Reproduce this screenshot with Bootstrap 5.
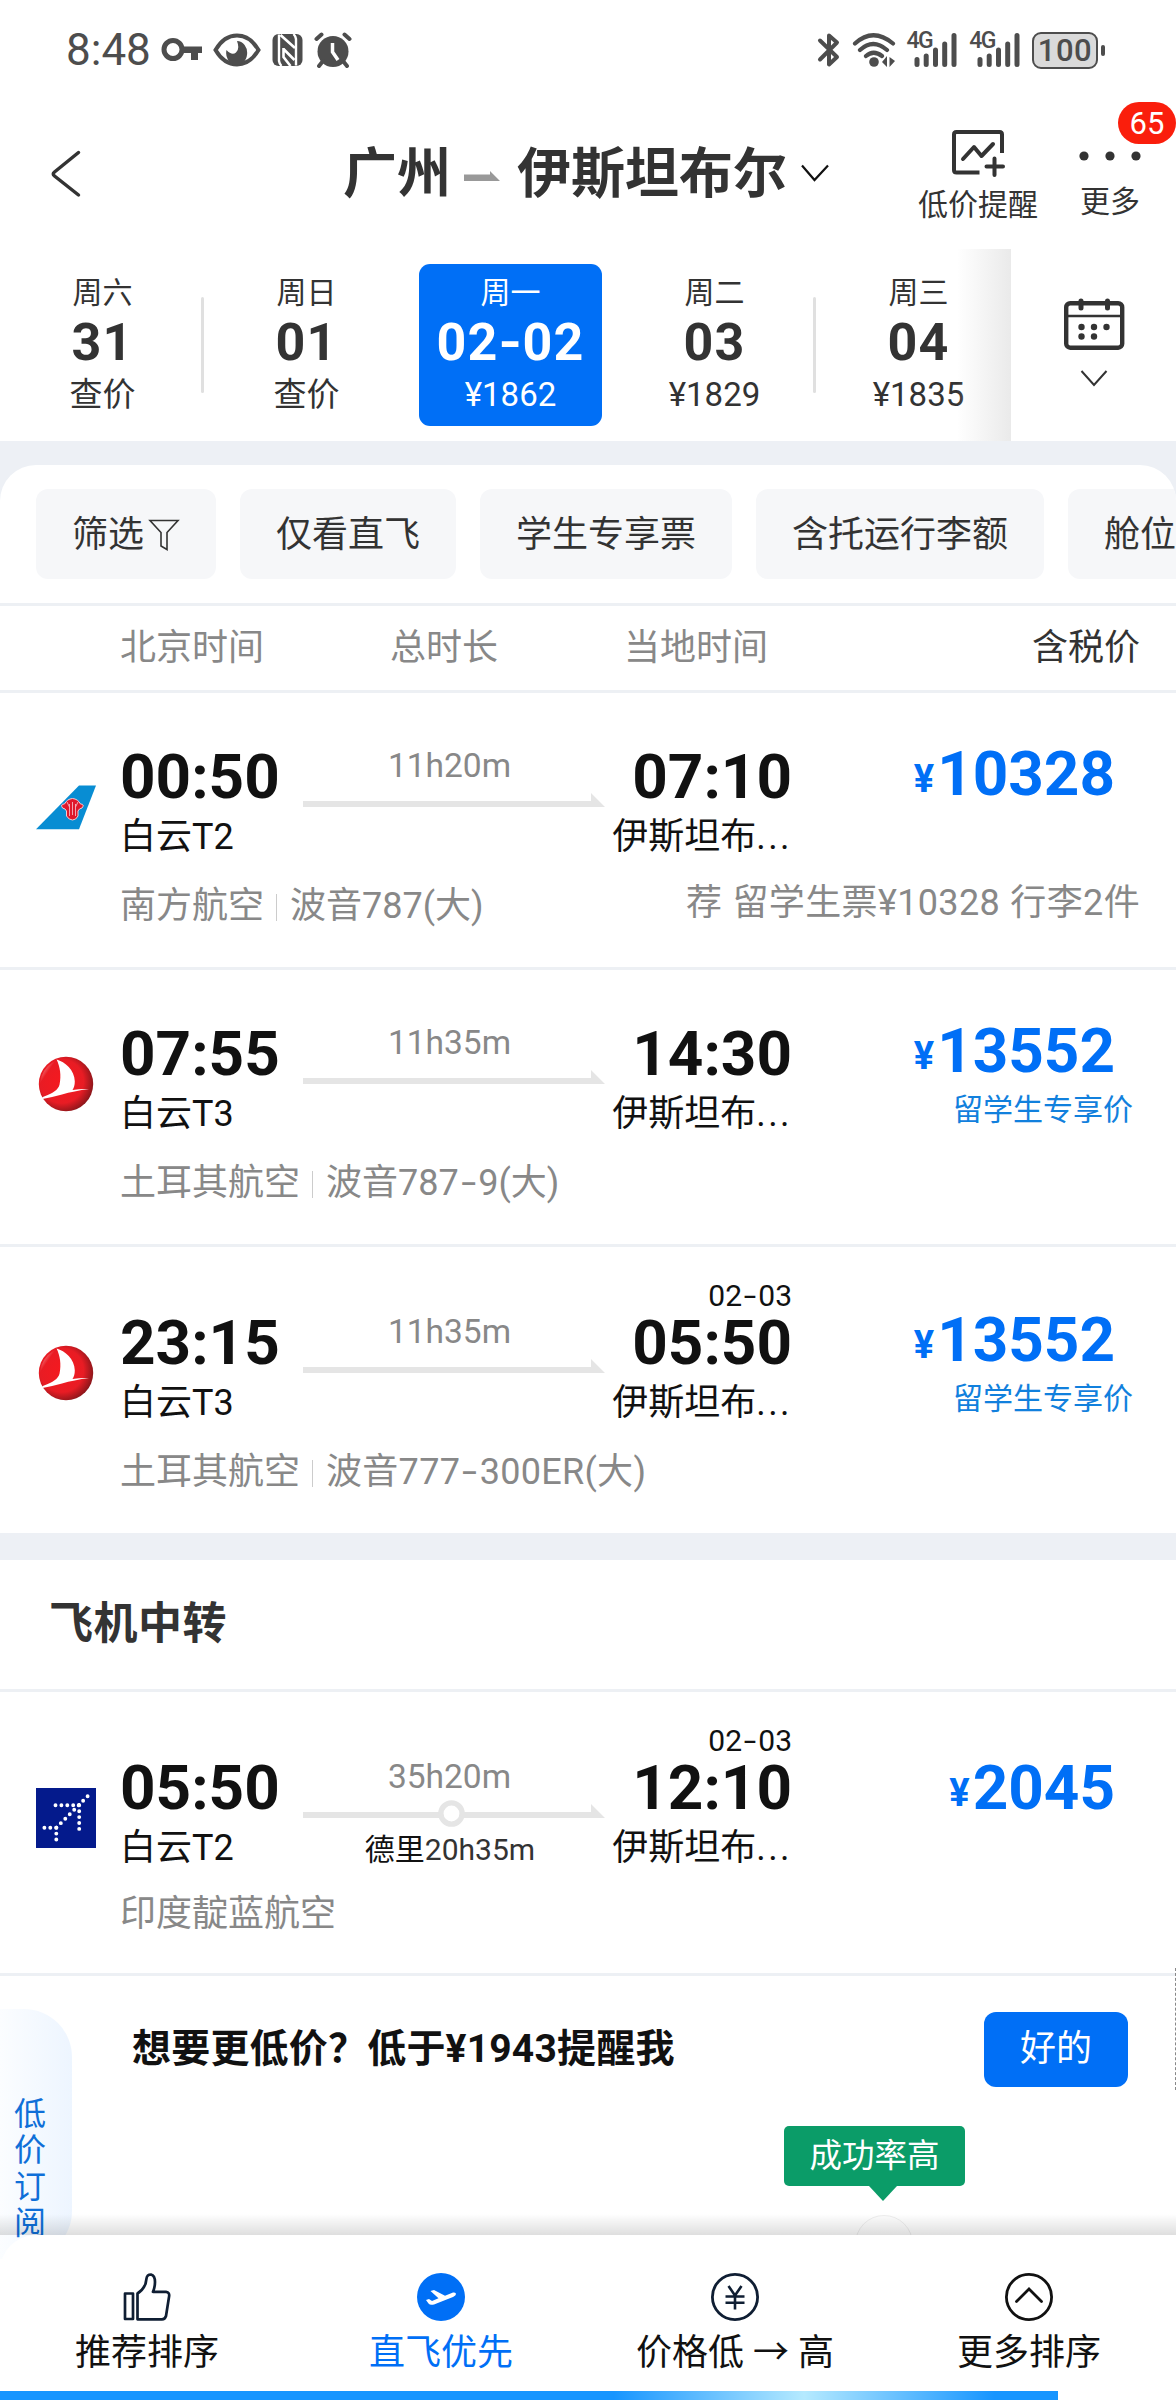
<!DOCTYPE html>
<html lang="zh-CN">
<head>
<meta charset="utf-8">
<meta name="viewport" content="width=device-width, initial-scale=1">
<title>广州 - 伊斯坦布尔</title>
<link href="https://cdn.jsdelivr.net/npm/bootstrap@5.3.0/dist/css/bootstrap.min.css" rel="stylesheet">
<style>
body{font-family:Roboto,"Noto Sans CJK SC",sans-serif;color:#111;background:#fff;font-size:36px;line-height:48px}
svg{display:block;flex:none}
.screen{width:1176px;height:2400px;overflow:hidden}
.ink{color:#333}
.dim{color:#888}
.statusbar{height:100px;padding:0 71px 0 66px;color:#4d4d4d}
.clock{font-size:44px;margin-right:10px}
.net{font-size:23px;line-height:20px;font-weight:500;letter-spacing:-1.500px;margin:-1px -19px 0 0}
.charge{font-size:31px;font-weight:500;line-height:33px;width:66px;height:37px;border:2.400px solid #4d4d4d;border-radius:9px;background:#dadada;letter-spacing:.5px}
.nub{width:4px;height:11px;border-radius:2px;background:#4d4d4d;margin-left:3px}
.titlebar{height:149px;color:#333}
.route{font-size:54px;font-weight:700;line-height:80px;margin-left:261px;padding-top:35px}
.tool-label{font-size:30px;line-height:36px}
.unread{right:0;top:2px;width:58px;height:42px;border-radius:21px;background:#fa1e0c;color:#fff;font-size:31px;line-height:43px}
.dates{height:192px;width:1011px}
.day{width:204px;flex:none;position:relative;padding-top:15px}
.day-box{width:183px;height:162px;border-radius:11px;padding:11px 0 0 1px}
.day-box.on{background:#006ff6;color:#fff}
.d-week{font-size:30px;line-height:36px}
.d-num{font-size:52px;font-weight:700;line-height:62px;letter-spacing:1.200px;margin-top:1px}
.d-price{font-size:33px;line-height:42px}
.day.sep::after{content:"";position:absolute;right:0;top:48px;width:3px;height:96px;border-radius:2px;background:#e0e0e0}
.fade-edge{right:0;top:0;width:54px;height:192px;background:linear-gradient(90deg,rgba(234,234,234,0),#eaeaea)}
.band{background:#edf0f5}
.sheet{border-radius:36px 36px 0 0}
.chips{padding:24px 0 24px 36px;gap:24px}
.chip{height:90px;border-radius:12px;background:#f6f7f9;padding:2px 36px 0;flex:none}
.rule{border-top:3px solid #edf0f4}
.cols{height:87px}
.flight{padding-top:48px}
.flight.dated{padding-top:60px}
.c-logo{width:84px;padding-top:36px}
.c-dep{width:183px}
.c-mid{width:302px;padding-top:5px}
.c-arr{width:187px}
.c-price{padding-right:42px}
.clock-time{font-size:62px;font-weight:700;line-height:62px;padding:5px 0}
.plus-day{font-size:30px;line-height:30px;margin:-26px 0 -4px}
.dash{display:inline-block;width:.54em;text-align:center;transform:scaleX(1.5)}
.d-num .dash{width:.46em;transform:scaleX(1.15)}
.dots3{letter-spacing:2.400px}
.dur{font-size:33.500px;line-height:40px;margin:0 9px 0 0}
.stop-over{font-size:30px;line-height:36px;margin:5px 8px 0 0}
.main-row{height:120px}
.fare{color:#006ff6;font-size:62px;font-weight:700;line-height:72px;margin-top:-3px;padding-right:19px;white-space:nowrap}
.fare.low{margin-top:0}
.yen{font-size:38px;line-height:1;margin-right:3px;vertical-align:3px}
.fare-note{color:#1180dd;font-size:30px;line-height:40px;margin:3px 1px 0 0}
.airline{padding:21px 36px 37px 120px}
.airline.tight{padding:18px 36px 35px 120px}
.vbar{width:1px;height:27px;background:#ccc;margin:3px 13px 0 12px}
.reco{margin-top:-7px;letter-spacing:.350px;word-spacing:1px}
.group-title{height:129px;font-size:44px;font-weight:700;padding:0 0 1px 49px;letter-spacing:.5px}
.alert-row{padding:36px 48px 0 132px}
.alert-text{font-size:39px;font-weight:700;letter-spacing:.2px;margin-top:-2px}
.ok-btn{width:144px;height:75px;border-radius:12px;font-size:36px;line-height:75px;padding:0;border:0;background:#006ff6;color:#fff}
.tip{left:784px;top:150px;width:181px;height:60px;border-radius:5px;background:#0b9c68;color:#fff;font-size:32.500px;line-height:61px}
.tip::after{content:"";position:absolute;left:85px;top:100%;border:14.500px solid transparent;border-top:15px solid #0b9c68;border-bottom:0}
.knob{left:855px;top:239px;width:58px;height:58px;border-radius:50%;border:1px solid #eee;background:#fdfdfd}
.side-tab{left:0;top:33px;width:72px;height:250px;border-radius:0 48px 48px 0;background:linear-gradient(90deg,#fbfdff,#edf5ff);color:#0f6fd8;font-size:32px;line-height:36.400px;padding:87px 26px 0 14px}
.edge-dash{right:0;top:-8px;height:122px;border-right:1px dashed #888}
.sortbar{height:156px;border-radius:36px 0 0 0;background:#fff;padding-top:38px}
.sortbar::before{content:"";position:absolute;left:0;right:0;top:-21px;height:21px;background:linear-gradient(rgba(0,0,0,0),rgba(0,0,0,.13))}
.sort{width:294px}
.sort.on{color:#006ff6}
.load{height:9px;width:1058px;background:linear-gradient(90deg,#1795ff 58%,#b5eaff 76%,#1795ff 94%)}
</style>
</head>
<body>
<svg width="0" height="0" class="position-absolute">
  <defs>
    <radialGradient id="ball" cx=".42" cy=".45" r=".62"><stop offset="0" stop-color="#f5191f"/><stop offset=".65" stop-color="#e81c24"/><stop offset="1" stop-color="#7c1519"/></radialGradient>
    <linearGradient id="gloss" x1="0" y1="0" x2=".7" y2=".7"><stop offset="0" stop-color="#fff" stop-opacity=".9"/><stop offset=".5" stop-color="#fff" stop-opacity="0"/></linearGradient>
    <symbol id="thy" viewBox="0 0 60 60">
      <circle cx="30" cy="30" r="27.2" fill="url(#ball)"/>
      <path d="M6 40A25.5 25.5 0 0 1 28 5Q10 14 6 40Z" fill="url(#gloss)"/>
      <path d="M20.600 5.500C29 8 38.600 16 38.800 27.300C38.800 31 38 34 36.500 36Q45 34.500 53 35Q38 37 26 40.500Q15 43.500 6.500 45Q5 43.500 8 42.500C17 39 22 36 23.500 30.700C25.500 21 24 13 20.600 5.500Z" fill="#fff"/>
    </symbol>
    <symbol id="leg" viewBox="0 0 302 30"><path d="M0 15H288V7L302 21H0Z" fill="#e5e5e5"/></symbol>
    <symbol id="sig" viewBox="0 0 46 36">
      <path d="M4 27.500V32.500M13.200 24V32.500M22.500 18V32.500M31.700 12V32.500M41 3.500V32.500" stroke="#4d4d4d" stroke-width="5" stroke-linecap="round"/>
    </symbol>
  </defs>
</svg>
<div class="screen d-flex flex-column">
  <div class="statusbar d-flex align-items-center flex-shrink-0">
    <span class="clock">8:48</span>
    <svg width="42" height="28" viewBox="0 0 42 28"><circle cx="12" cy="13.500" r="9" fill="none" stroke="#4d4d4d" stroke-width="5"/><path d="M21 10.500H41V17H37V24H30V17H21Z" fill="#4d4d4d"/></svg>
    <svg style="margin-left:10px" width="48" height="34" viewBox="0 0 48 34"><path d="M2.500 17Q11 2.500 24 2.500T45.500 17Q37 31.500 24 31.500T2.500 17Z" fill="none" stroke="#4d4d4d" stroke-width="4"/><path d="M24 8A10.500 12 0 1 1 13.500 17Q19 23 23 19.500T24 8Z" fill="#4d4d4d"/></svg>
    <svg style="margin-left:10px" width="33" height="34" viewBox="0 0 32 34"><rect x="1" y="1" width="30" height="32" rx="6" fill="#4d4d4d"/><path d="M7.500 1.500V28Q8 31 10 33M24.500 32.500V6Q24 3 22 1" fill="none" stroke="#fff" stroke-width="2.400"/><path d="M9 2L23.500 15M12 16L23 27M12 15V24L19 33" fill="none" stroke="#fff" stroke-width="2.600"/></svg>
    <svg style="margin-left:9px" width="40" height="36" viewBox="0 0 38 36"><circle cx="19" cy="19.500" r="15.500" fill="#4d4d4d"/><path d="M2.500 7L7.500 2.500M35.500 7L30.500 2.500M9 29L5 34M29 29L33 34" stroke="#4d4d4d" stroke-width="4" stroke-linecap="round"/><path d="M18.500 11V20L24 28" fill="none" stroke="#fff" stroke-width="3.500"/></svg>
    <div class="d-flex align-items-center ms-auto">
      <svg width="24" height="36" viewBox="0 0 24 36"><path d="M3 8.500L20 25L12 32.500V3.500L20 10.500L3 27.500" fill="none" stroke="#4d4d4d" stroke-width="4" stroke-linecap="round" stroke-linejoin="round"/></svg>
      <svg style="margin-left:10px" width="46" height="36" viewBox="0 0 46 36"><g fill="none" stroke="#4d4d4d" stroke-width="4.200" stroke-linecap="round"><path d="M4 11.500Q22 -5 42 11.500M9 18Q22 6 36 18M15 24Q22.500 17.500 31 24"/></g><circle cx="23" cy="30" r="4.800" fill="#4d4d4d"/><path d="M36 24V35L31 30ZM38.500 25L44 29L38.500 35Z" fill="#4d4d4d"/></svg>
      <div class="d-flex align-items-start" style="margin-left:10px"><span class="net">4G</span><svg width="46" height="36"><use href="#sig" width="46" height="36"/></svg></div>
      <div class="d-flex align-items-start" style="margin-left:10px"><span class="net">4G</span><svg width="46" height="36"><use href="#sig" width="46" height="36"/></svg></div>
      <span class="charge text-center" style="margin-left:10px">100</span><i class="nub"></i>
    </div>
  </div>

  <div class="titlebar d-flex position-relative flex-shrink-0">
    <svg style="margin:49px 0 0 50px" width="32" height="50" viewBox="0 0 32 50"><path d="M28.500 3.500L4.500 23Q2 25 4.500 27L28.500 46" fill="none" stroke="#333" stroke-width="3.500" stroke-linecap="round"/></svg>
    <div class="route d-flex text-nowrap">
      <span>广州</span>
      <svg style="margin:36px 17px 0 13px" width="36" height="12" viewBox="0 0 36 12"><path d="M0 3.500H26V0L36 10H0Z" fill="#999"/></svg>
      <span>伊斯坦布尔</span>
      <svg style="margin:29px 0 0 13px" width="30" height="18" viewBox="0 0 30 18"><path d="M2 1.500L14.500 16L28 1.500" fill="none" stroke="#111" stroke-width="2.200"/></svg>
    </div>
    <div class="d-flex ms-auto pt-4" style="margin-right:35px;gap:41px">
      <div class="d-flex flex-column align-items-center">
        <svg class="mt-1" width="56" height="50" viewBox="0 0 56 50"><path d="M29.500 44.500H6.500Q4 44.500 4 42V6.500Q4 4 6.500 4H49.500Q52 4 52 6.500V25" fill="none" stroke="#333" stroke-width="4"/><path d="M13 31L24 19L31.500 28L43 16M44.500 30.500V47M36.500 38.500H53" fill="none" stroke="#333" stroke-width="4" stroke-linecap="round" stroke-linejoin="round"/></svg>
        <span class="tool-label" style="margin-top:9px">低价提醒</span>
      </div>
      <div class="d-flex flex-column align-items-center">
        <svg width="62" height="10" viewBox="0 0 62 10" style="margin:27px 0 23px"><g fill="#333"><circle cx="5" cy="5" r="4.600"/><circle cx="31" cy="5" r="4.600"/><circle cx="57" cy="5" r="4.600"/></g></svg>
        <span class="tool-label">更多</span>
      </div>
    </div>
    <span class="unread position-absolute text-center">65</span>
  </div>

  <div class="d-flex flex-shrink-0 ink">
    <div class="dates d-flex position-relative overflow-hidden text-center">
      <div class="day sep d-flex justify-content-center"><div class="day-box"><div class="d-week">周六</div><div class="d-num">31</div><div class="d-price">查价</div></div></div>
      <div class="day d-flex justify-content-center"><div class="day-box"><div class="d-week">周日</div><div class="d-num">01</div><div class="d-price">查价</div></div></div>
      <div class="day d-flex justify-content-center"><div class="day-box on"><div class="d-week">周一</div><div class="d-num">02<span class="dash">-</span>02</div><div class="d-price">¥1862</div></div></div>
      <div class="day sep d-flex justify-content-center"><div class="day-box"><div class="d-week">周二</div><div class="d-num">03</div><div class="d-price">¥1829</div></div></div>
      <div class="day d-flex justify-content-center"><div class="day-box"><div class="d-week">周三</div><div class="d-num">04</div><div class="d-price">¥1835</div></div></div>
      <div class="fade-edge position-absolute"></div>
    </div>
    <div class="flex-grow-1 d-flex flex-column align-items-center pt-5">
      <svg width="62" height="54" viewBox="0 0 62 54"><rect x="3.200" y="6.200" width="56" height="44.500" rx="4" fill="none" stroke="#333" stroke-width="4.400"/><path d="M4 19H58" stroke="#333" stroke-width="2.500"/><path d="M18 4V11M44.500 4V11" stroke="#333" stroke-width="5" stroke-linecap="round"/><g fill="#333"><circle cx="18.500" cy="30" r="3.200"/><circle cx="31" cy="30" r="3.200"/><circle cx="43.500" cy="30" r="3.200"/><circle cx="18.500" cy="39.500" r="3.200"/><circle cx="31" cy="39.500" r="3.200"/></g></svg>
      <svg style="margin-top:18px" width="28" height="18" viewBox="0 0 28 18"><path d="M1.500 2L14 16L26.500 2" fill="none" stroke="#333" stroke-width="2"/></svg>
    </div>
  </div>

  <div class="band pt-4 flex-shrink-0">
    <div class="sheet bg-white overflow-hidden ink">
      <div class="chips d-flex text-nowrap">
        <div class="chip d-flex align-items-center">筛选<svg class="ms-1" width="32" height="34" viewBox="0 0 32 34"><path d="M2 2.500H30L19 14.500V31.500L13 28V14.500Z" fill="none" stroke="#333" stroke-width="1.600"/></svg></div>
        <div class="chip d-flex align-items-center">仅看直飞</div>
        <div class="chip d-flex align-items-center">学生专享票</div>
        <div class="chip d-flex align-items-center">含托运行李额</div>
        <div class="chip d-flex align-items-center">舱位</div>
      </div>
    </div>
  </div>

  <div class="cols rule d-flex align-items-center flex-shrink-0 dim">
    <span style="width:390px;padding-left:120px">北京时间</span>
    <span style="width:234px">总时长</span>
    <span>当地时间</span>
    <span class="ms-auto ink" style="padding-right:36px">含税价</span>
  </div>

  <article class="flight rule flex-shrink-0">
    <div class="main-row d-flex" style="padding-left:36px">
      <div class="c-logo"><svg width="60" height="60" viewBox="0 0 60 60"><path d="M43 8.500H60L43 52.300H0Z" fill="#088dd3"/><path d="M28.500 27Q24 27 26.500 31Q29.500 31.500 30.500 34V39Q33 43 36.500 43T42 39V34Q43 31.500 46 31Q49 27 44.500 27Q42 22 36.500 21.500Q31 22 28.500 27Z" fill="#e0182b" stroke="#f7c9d0" stroke-width="1"/><path d="M33.500 27V39M39.500 27V39M36.500 25V38M31 25L33.500 30M42 25L39.500 30" stroke="#f3b4bf" stroke-width=".9"/></svg></div>
      <div class="c-dep"><div class="clock-time">00:50</div><div>白云T2</div></div>
      <div class="c-mid"><div class="dur dim text-center">11h20m</div><svg width="302" height="30"><use href="#leg" width="302" height="30"/></svg></div>
      <div class="c-arr text-end text-nowrap"><div class="clock-time">07:10</div><div>伊斯坦布<span class="dots3">...</span></div></div>
      <div class="c-price flex-grow-1 text-end"><div class="fare"><span class="yen">¥</span>10328</div></div>
    </div>
    <div class="airline d-flex align-items-center dim text-nowrap"><span>南方航空</span><i class="vbar"></i><span>波音787(大)</span><span class="reco ms-auto">荐 留学生票¥10328 行李2件</span></div>
  </article>

  <article class="flight rule flex-shrink-0">
    <div class="main-row d-flex" style="padding-left:36px">
      <div class="c-logo"><svg width="60" height="60"><use href="#thy" width="60" height="60"/></svg></div>
      <div class="c-dep"><div class="clock-time">07:55</div><div>白云T3</div></div>
      <div class="c-mid"><div class="dur dim text-center">11h35m</div><svg width="302" height="30"><use href="#leg" width="302" height="30"/></svg></div>
      <div class="c-arr text-end text-nowrap"><div class="clock-time">14:30</div><div>伊斯坦布<span class="dots3">...</span></div></div>
      <div class="c-price flex-grow-1 text-end"><div class="fare"><span class="yen">¥</span>13552</div><div class="fare-note">留学生专享价</div></div>
    </div>
    <div class="airline d-flex align-items-center dim text-nowrap"><span>土耳其航空</span><i class="vbar"></i><span>波音787<span class="dash">-</span>9(大)</span></div>
  </article>

  <article class="flight dated rule flex-shrink-0">
    <div class="main-row d-flex" style="padding-left:36px">
      <div class="c-logo"><svg width="60" height="60"><use href="#thy" width="60" height="60"/></svg></div>
      <div class="c-dep"><div class="clock-time">23:15</div><div>白云T3</div></div>
      <div class="c-mid"><div class="dur dim text-center">11h35m</div><svg width="302" height="30"><use href="#leg" width="302" height="30"/></svg></div>
      <div class="c-arr text-end text-nowrap"><div class="plus-day">02<span class="dash">-</span>03</div><div class="clock-time">05:50</div><div>伊斯坦布<span class="dots3">...</span></div></div>
      <div class="c-price flex-grow-1 text-end"><div class="fare"><span class="yen">¥</span>13552</div><div class="fare-note">留学生专享价</div></div>
    </div>
    <div class="airline d-flex align-items-center dim text-nowrap"><span>土耳其航空</span><i class="vbar"></i><span style="letter-spacing:.3px">波音777<span class="dash">-</span>300ER(大)</span></div>
  </article>

  <div class="band flex-shrink-0" style="height:27px"></div>
  <div class="group-title d-flex align-items-center flex-shrink-0 ink">飞机中转</div>

  <article class="flight dated rule flex-shrink-0">
    <div class="main-row d-flex" style="padding-left:36px">
      <div class="c-logo"><svg width="60" height="60" viewBox="0 0 60 60"><path d="M0 0H60V60H0Z" fill="#041a8c"/><g fill="none" stroke="#fff" stroke-width="3.900" stroke-linecap="round"><path stroke-dasharray="0 5.900" d="M19.500 17.300H43.300M43.200 17.300V42M20.300 39.700V52.200M8.400 39.700H21"/><path stroke-dasharray="0 6.320" d="M51.600 8.300L20 40"/></g></svg></div>
      <div class="c-dep"><div class="clock-time">05:50</div><div>白云T2</div></div>
      <div class="c-mid"><div class="dur dim text-center">35h20m</div><svg width="302" height="30"><use href="#leg" width="302" height="30"/><circle cx="148.500" cy="16.500" r="10.600" fill="#fff" stroke="#e5e5e5" stroke-width="5.400"/></svg><div class="stop-over text-center">德里<span class="ink">20h35m</span></div></div>
      <div class="c-arr text-end text-nowrap"><div class="plus-day">02<span class="dash">-</span>03</div><div class="clock-time">12:10</div><div>伊斯坦布<span class="dots3">...</span></div></div>
      <div class="c-price flex-grow-1 text-end"><div class="fare low"><span class="yen">¥</span>2045</div></div>
    </div>
    <div class="airline tight d-flex align-items-center dim text-nowrap"><span>印度靛蓝航空</span></div>
  </article>

  <section class="rule position-relative flex-grow-1 overflow-visible" style="min-height:0">
    <div class="alert-row d-flex align-items-center justify-content-between">
      <span class="alert-text text-nowrap">想要更低价？低于¥1943提醒我</span>
      <button class="btn ok-btn" type="button">好的</button>
    </div>
    <div class="tip position-absolute text-center">成功率高</div>
    <div class="knob position-absolute"></div>
    <div class="side-tab position-absolute">低价订阅</div>
    <div class="edge-dash position-absolute"></div>
  </section>

  <nav class="sortbar d-flex position-relative flex-shrink-0 text-center text-nowrap">
    <div class="sort d-flex flex-column align-items-center">
      <svg width="48" height="48" viewBox="0 0 48 48"><path d="M2 20.500H10V46H2ZM14.500 20.500Q23 15 23.500 5.500Q24 1.500 28 1.500Q32 2.500 32 9Q32 14 30 18.800H43Q47 19.500 46 24L43 43Q42 46.300 39 46.300H14.500Z" fill="none" stroke="#0f1e33" stroke-width="2.700" stroke-linejoin="round"/></svg>
      <span class="mt-1 pt-1">推荐排序</span>
    </div>
    <div class="sort on d-flex flex-column align-items-center">
      <svg width="48" height="48" viewBox="0 0 48 48"><circle cx="24" cy="24" r="24" fill="#006ff6"/><path d="M9 27L12 26L15 28L21.500 25.300L13.500 18L17 17L28 22.800L36 19.500Q39 19 39 21Q39 22.500 36 24L17 31.500Q13 32.500 11.500 30.500Z" fill="#fff"/></svg>
      <span class="mt-1 pt-1">直飞优先</span>
    </div>
    <div class="sort d-flex flex-column align-items-center">
      <svg width="48" height="48" viewBox="0 0 48 48"><circle cx="24" cy="24" r="22.600" fill="none" stroke="#0f1e33" stroke-width="2.800"/><path d="M17.500 13L24 22.500L30.500 13M14.500 23.500H33.500M14.500 29.800H33.500M24 22.500V36.500" fill="none" stroke="#0f1e33" stroke-width="2.600"/></svg>
      <span class="mt-1 pt-1">价格低 → 高</span>
    </div>
    <div class="sort d-flex flex-column align-items-center">
      <svg width="48" height="48" viewBox="0 0 48 48"><circle cx="24" cy="24" r="22.600" fill="none" stroke="#111" stroke-width="2.800"/><path d="M11.500 28.500L24 16L36.500 28.500" fill="none" stroke="#111" stroke-width="2.800" stroke-linecap="round"/></svg>
      <span class="mt-1 pt-1">更多排序</span>
    </div>
  </nav>
  <div class="load flex-shrink-0"></div>
</div>
<script src="https://cdn.jsdelivr.net/npm/bootstrap@5.3.0/dist/js/bootstrap.bundle.min.js"></script>
</body>
</html>
